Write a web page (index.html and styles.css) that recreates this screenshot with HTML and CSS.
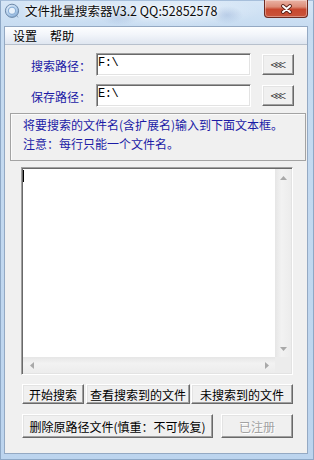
FILE: index.html
```html
<!DOCTYPE html>
<html lang="zh-CN">
<head>
<meta charset="utf-8">
<title>文件批量搜索器</title>
<link rel="stylesheet" href="styles.css">
</head>
<body>
<div class="window">
  <header class="titlebar">
    <svg class="app-icon" width="16" height="16" viewBox="0 0 16 16">
      <defs>
        <radialGradient id="ig" cx="0.4" cy="0.35" r="0.7">
          <stop offset="0" stop-color="#f4f9fe"/>
          <stop offset="0.6" stop-color="#b7d2ee"/>
          <stop offset="1" stop-color="#7aa3cf"/>
        </radialGradient>
      </defs>
      <path d="M11.5 12.2 L14.6 15 L12.6 11.2 Z" fill="#7c98b8"/>
      <circle cx="8" cy="7.8" r="6.6" fill="url(#ig)" stroke="#6f8aa9" stroke-width="1"/>
      <circle cx="8" cy="7.8" r="3.6" fill="#e9f2fb" stroke="#8cb0d6" stroke-width="1.2"/>
    </svg>
    <span class="title">文件批量搜索器V3.2 QQ:52852578</span>
    <div class="close-btn">
      <svg width="13" height="10" viewBox="0 0 13 10">
        <path d="M3 2 L10 8 M10 2 L3 8" stroke="#5b2219" stroke-width="3.8" stroke-linecap="round"/>
        <path d="M3 2 L10 8 M10 2 L3 8" stroke="#ffffff" stroke-width="2" stroke-linecap="round"/>
      </svg>
    </div>
  </header>

  <div class="client">
    <nav class="menubar">
      <span class="menu-item">设置</span>
      <span class="menu-item">帮助</span>
    </nav>

    <main class="content">
      <div class="path-row">
        <span class="path-label">搜索路径：</span>
        <div class="path-input">F:\</div>
        <button class="btn browse-btn">&lt;&lt;&lt;</button>
      </div>
      <div class="path-row second">
        <span class="path-label">保存路径：</span>
        <div class="path-input">E:\</div>
        <button class="btn browse-btn">&lt;&lt;&lt;</button>
      </div>

      <div class="info-box">
        <p class="info-line">将要搜索的文件名(含扩展名)输入到下面文本框。</p>
        <p class="info-line">注意：每行只能一个文件名。</p>
      </div>

      <div class="editor">
        <div class="editor-inner">
          <div class="edit-area"><span class="caret"></span></div>
          <div class="vscroll">
            <span class="sb-btn"><svg width="7" height="4" viewBox="0 0 7 4"><path d="M0 4 L3.5 0 L7 4 Z" fill="#a9a9a9"/></svg></span>
            <span class="sb-btn"><svg width="7" height="4" viewBox="0 0 7 4"><path d="M0 0 L3.5 4 L7 0 Z" fill="#a9a9a9"/></svg></span>
          </div>
          <div class="hscroll">
            <span class="sb-btn"><svg width="4" height="7" viewBox="0 0 4 7"><path d="M4 0 L0 3.5 L4 7 Z" fill="#a9a9a9"/></svg></span>
            <span class="sb-btn"><svg width="4" height="7" viewBox="0 0 4 7"><path d="M0 0 L4 3.5 L0 7 Z" fill="#a9a9a9"/></svg></span>
          </div>
          <div class="corner"></div>
        </div>
      </div>

      <div class="btn-row first">
        <button class="btn w-start">开始搜索</button>
        <button class="btn w-view">查看搜索到的文件</button>
        <button class="btn w-miss">未搜索到的文件</button>
      </div>
      <div class="btn-row second">
        <button class="btn w-delete">删除原路径文件(慎重：不可恢复)</button>
        <button class="btn w-reg" disabled>已注册</button>
      </div>
    </main>
  </div>
</div>
</body>
</html>
```

FILE: styles.css
```css
* { box-sizing: border-box; }

html, body {
  margin: 0;
  padding: 0;
}

body {
  width: 314px;
  height: 460px;
  overflow: hidden;
  font-family: "Noto Sans CJK SC", "Noto Sans", sans-serif;
  font-size: 12px;
  color: #000;
}

.window {
  width: 314px;
  height: 460px;
  display: flex;
  flex-direction: column;
  padding: 0 5px 5px 3px;
  background:
    radial-gradient(ellipse 22px 10px at 118px 14px, rgba(120,150,200,0.35), rgba(120,150,200,0) 100%),
    radial-gradient(ellipse 16px 9px at 226px 14px, rgba(120,150,200,0.30), rgba(120,150,200,0) 100%),
    radial-gradient(ellipse 90px 16px at 170px 10px, rgba(255,255,255,0.45), rgba(255,255,255,0) 100%),
    linear-gradient(180deg, #d6e6f6 0px, #c7dcf1 26px, #bcd4ee 100%);
  border: 1px solid #8ea8c6;
  border-top-color: #a7bfdb;
}

.titlebar {
  height: 25px;
  display: flex;
  align-items: flex-start;
  flex: none;
}

.app-icon {
  margin: 2px 0 0 0;
  flex: none;
}

.title {
  margin: 2px 0 0 5px;
  line-height: 16px;
  font-size: 12.5px;
  color: #0b0b0b;
  white-space: nowrap;
  text-shadow: 0 0 6px rgba(255,255,255,0.95), 0 0 3px rgba(255,255,255,0.9);
}

.close-btn {
  margin: -1px 0 0 auto;
  width: 44px;
  height: 18px;
  flex: none;
  display: flex;
  align-items: center;
  justify-content: center;
  border: 1px solid #6e2a20;
  border-top: none;
  border-radius: 0 0 4px 4px;
  background: linear-gradient(180deg, #eab3a5 0%, #dd8d78 40%, #c8482f 55%, #c9553b 100%);
  box-shadow: inset 0 0 0 1px rgba(255,255,255,0.35);
  padding-top: 1px;
}

.client {
  flex: 1;
  display: flex;
  flex-direction: column;
  background: #f0f0f0;
  border: 1px solid #94a9c3;
}

.menubar {
  height: 18px;
  flex: none;
  display: flex;
  gap: 13px;
  padding-left: 8px;
  line-height: 17px;
  background: linear-gradient(180deg, #fdfeff 0%, #f2f5fa 45%, #dfe6f0 100%);
  border-bottom: 1px solid #b7c0cc;
}

.content {
  flex: 1;
  padding-top: 8px;
  display: flex;
  flex-direction: column;
}

.path-row {
  display: flex;
  align-items: center;
  height: 23px;
  padding-left: 26px;
}

.path-row.second {
  margin-top: 8px;
}

.path-label {
  width: 65px;
  color: #1b1ba6;
  line-height: 16px;
  padding-top: 2px;
}

.path-input {
  width: 155px;
  height: 23px;
  background: #fff;
  border: 1px solid;
  border-color: #a0a0a0 #ffffff #ffffff #a0a0a0;
  box-shadow: inset 1px 1px 0 #696969, inset -1px -1px 0 #e3e3e3;
  padding: 3px 0 0 1px;
  font-family: "Liberation Mono", monospace;
  font-size: 12px;
  line-height: 13px;
  color: #000;
  letter-spacing: -0.5px;
}

.btn {
  font-family: "Noto Sans CJK SC", "Noto Sans", sans-serif;
  font-size: 12px;
  color: #000;
  padding: 0;
  margin: 0;
  background: #f0f0f0;
  border: 1px solid;
  border-color: #ffffff #696969 #696969 #ffffff;
  box-shadow: inset -1px -1px 0 #a0a0a0, inset 1px 1px 0 #e3e3e3;
  border-radius: 0;
  white-space: nowrap;
  display: flex;
  align-items: center;
  justify-content: center;
}

.browse-btn {
  width: 32px;
  height: 21px;
  margin-left: 11px;
  font-family: "Noto Sans CJK SC", sans-serif;
  font-size: 14px;
  font-weight: 300;
  letter-spacing: -3.5px;
  padding: 0 3px 2px 0;
  color: #222;
}

.info-box {
  margin: 6px 0 0 5px;
  width: 296px;
  height: 48px;
  border: 1px solid #a3a3a3;
  box-shadow: inset 1px 1px 0 #fbfbfb;
  padding: 1px 0 0 12px;
}

.info-line {
  margin: 0;
  line-height: 19px;
  color: #1b1ba6;
  white-space: nowrap;
}

.editor {
  margin: 6px 0 0 16px;
  width: 272px;
  height: 208px;
  border: 1px solid;
  border-color: #a0a0a0 #ffffff #ffffff #a0a0a0;
  box-shadow: inset 1px 1px 0 #696969, inset -1px -1px 0 #e3e3e3;
  padding: 1px;
}

.editor-inner {
  width: 100%;
  height: 100%;
  display: grid;
  grid-template-columns: 1fr 16px;
  grid-template-rows: 1fr 16px;
}

.edit-area {
  background: #fff;
  padding: 1px 0 0 0;
}

.caret {
  display: block;
  width: 1px;
  height: 12px;
  background: #000;
}

.vscroll {
  background: linear-gradient(90deg, #e6e6e6 0%, #f2f2f2 40%, #ececec 100%);
  display: flex;
  flex-direction: column;
  justify-content: space-between;
}

.hscroll {
  background: linear-gradient(180deg, #e6e6e6 0%, #f2f2f2 40%, #ececec 100%);
  display: flex;
  justify-content: space-between;
}

.sb-btn {
  width: 16px;
  height: 16px;
  display: flex;
  align-items: center;
  justify-content: center;
}

.vscroll .sb-btn { height: 17px; }
.hscroll .sb-btn { width: 17px; }

.corner {
  background: #ececec;
}

.btn-row {
  display: flex;
  margin-left: 17px;
}

.btn-row.first {
  margin-top: 9px;
  height: 20px;
}

.btn-row.second {
  margin-top: 10px;
  height: 24px;
}

.btn-row .btn { height: 100%; }

.w-start { width: 62px; }
.w-view { width: 104px; margin-left: 2px; }
.w-miss { width: 102px; margin-left: 1px; }
.w-delete { width: 191px; }
.w-reg { width: 72px; margin-left: 8px; }

.btn:disabled {
  color: #a2a2a2;
  text-shadow: 1px 1px 0 #ffffff;
}
```
